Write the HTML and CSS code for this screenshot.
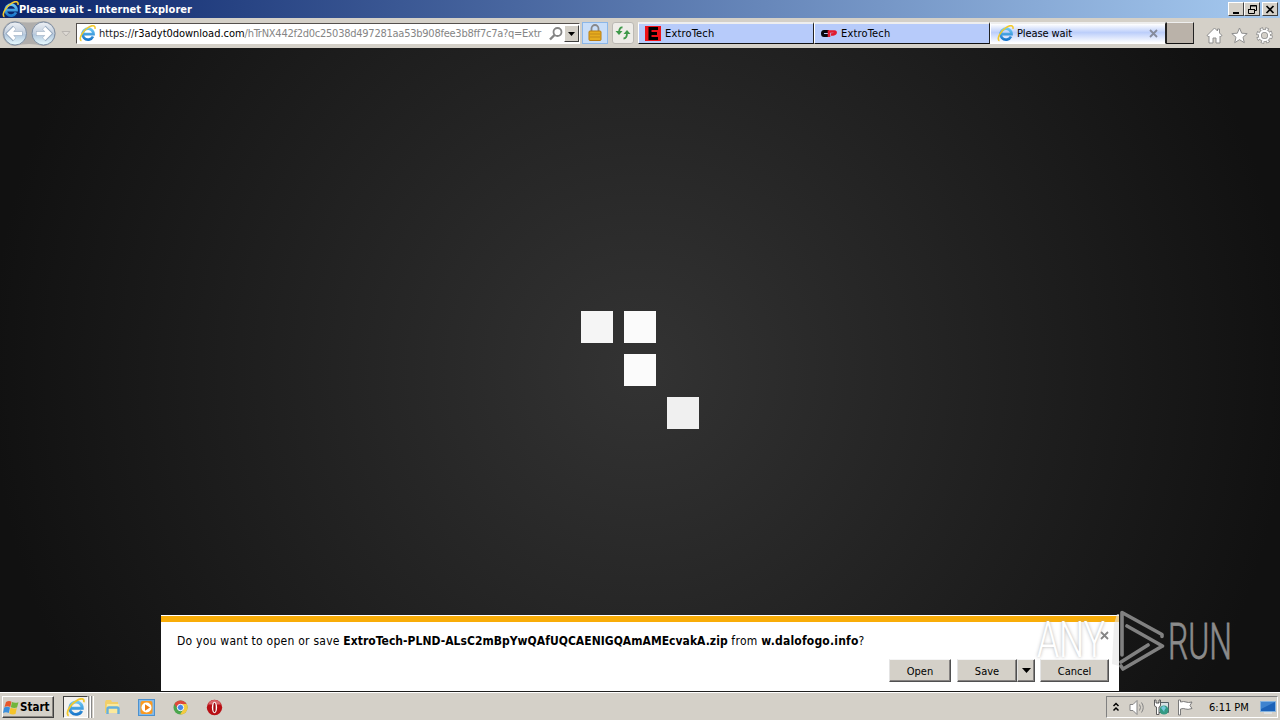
FILE: index.html
```html
<!DOCTYPE html>
<html lang="en">
<head>
<meta charset="utf-8">
<title>Please wait</title>
<link rel="stylesheet" href="styles.css">
</head>
<body>
<svg class="defs" width="0" height="0">
  <defs>
    <linearGradient id="blue" x1="0" y1="0" x2="0" y2="1"><stop offset="0" stop-color="#6cc8f4"/><stop offset="1" stop-color="#1a78cc"/></linearGradient>
    <linearGradient id="orb" x1="0" y1="0" x2="0" y2="1"><stop offset="0" stop-color="#eef1f5"/><stop offset=".48" stop-color="#c3cfde"/><stop offset=".55" stop-color="#b4c9de"/><stop offset="1" stop-color="#e8fbff"/></linearGradient>
    <symbol id="ie" viewBox="0 0 16 16">
      <path d="M13.2 10.8A5.2 5.2 0 1 1 13.7 8.6H4.6" fill="none" stroke="url(#blue)" stroke-width="2.5"/>
      <path d="M2.300 14.800C-.6 14 2.500 6 8.500 2.500 12-.1 15.800-.2 15 3.600" fill="none" stroke="#f2c92d" stroke-width="1.500"/>
    </symbol>
  </defs>
</svg>
<div class="screen">
  <header class="titlebar">
    <svg class="title-icon" width="17" height="17"><use href="#ie"/></svg>
    <span class="title">Please wait - Internet Explorer</span>
    <div class="window-buttons">
      <span class="winbtn"><svg width="14" height="12"><path d="M3 9h6" stroke="#000" stroke-width="2"/></svg></span>
      <span class="winbtn"><svg width="14" height="12"><path d="M4.500 5V1.500h6v5H9M4 2h7M2.500 5.500h6v4h-6zM2 5.500h7" fill="none" stroke="#000"/></svg></span>
      <span class="winbtn last"><svg width="14" height="12"><path d="M2.500 2l7 7M9.500 2l-7 7" stroke="#000" stroke-width="1.700"/></svg></span>
    </div>
  </header>

  <nav class="toolbar">
    <svg class="nav-orbs" width="76" height="30" viewBox="0 18 76 30">
      <path d="M15 21Q29 24 43 21A12.500 12.500 0 0 1 43 46Q29 42 15 46A12.500 12.500 0 0 1 15 21" fill="#b0aeac"/>
      <g fill="url(#orb)" stroke="#7f8fa3"><circle cx="15" cy="33.500" r="11.500"/><circle cx="43.500" cy="33.500" r="11.500"/></g>
      <g fill="none" stroke="#96a9bf" stroke-width="4.600"><path d="M22.500 33.500H9M14.500 27.500l-6 6 6 6M36 33.500h13.500M44 27.500l6 6-6 6"/></g>
      <g fill="none" stroke="#fff" stroke-width="3.400"><path d="M22 33.500H9M14.500 28l-5.500 5.500 5.500 5.500M36.500 33.500h13M44 28l5.500 5.500-5.500 5.500"/></g>
      <path d="M62 31.500h8l-4 4.500z" fill="#dedad5" stroke="#b8b4b0"/>
    </svg>
    <div class="address">
      <svg width="17" height="17"><use href="#ie"/></svg>
      <span class="url"><span class="scheme">https://</span><span class="host">r3adyt0download.com</span><span class="path">/hTrNX442f2d0c25038d497281aa53b908fee3b8ff7c7a?q=Extr</span></span>
      <svg class="search" width="15" height="16"><circle cx="8.500" cy="6" r="4" fill="none" stroke="#858585" stroke-width="1.800"/><path d="M5.500 9L1 13.500" stroke="#858585" stroke-width="2.400"/></svg>
      <span class="drop"><svg width="9" height="6"><path d="M1 1h7L4.500 5z"/></svg></span>
    </div>
    <span class="lock"><svg width="14" height="18"><path d="M3.500 8V4.500a3.500 3.500 0 0 1 7 0V8" fill="none" stroke="#88888a" stroke-width="1.800"/><rect x="1" y="7" width="12" height="9.500" rx="1" fill="#e5ac1e" stroke="#b97c10"/><path d="M2 10h10M2 13h10" stroke="#c48919"/></svg></span>
    <span class="refresh"><svg width="18" height="16"><g fill="none" stroke="#3f994a" stroke-width="1.800"><path d="M8.500 2.500Q5.500 2 5 7M9.500 13.500Q13 13.500 13 8"/></g><path d="M1.500 6h7L5 10zM9.500 9h7L13 5z" fill="#3f994a"/></svg></span>
    <div class="tabs">
      <div class="tab"><svg width="16" height="16"><path d="M0 0h16v15H0z" fill="#ef1118"/><path d="M13 2.500H5v10h8M5 7.500h7" fill="none" stroke="#000" stroke-width="3"/></svg><span>ExtroTech</span></div>
      <div class="tab"><svg width="16" height="16"><path d="M8 5.500H3Q1.500 5.500 1.500 7.500T3 9.500h5" fill="none" stroke="#09090c" stroke-width="3"/><path d="M8 11V5.500h5.500Q15 5.500 14.500 7 14 8.500 10 8.500" fill="none" stroke="#e21b2d" stroke-width="2.600"/></svg><span>ExtroTech</span></div>
      <div class="tab active"><svg width="17" height="17"><use href="#ie"/></svg><span class="wait">Please wait</span><svg class="tab-close" width="9" height="9"><path d="M1 1l7 7M8 1L1 8" stroke="#858b9b" stroke-width="1.800"/></svg></div>
      <div class="newtab"></div>
    </div>
    <div class="commands">
      <svg width="17" height="17"><path d="M1 8.500L8.500 1l3 3V2h2v4L16 8.500l-1.500 1-.5-.5v7h-4v-5H7v5H3V9l-.5.500z" fill="#fff" stroke="#8e8e8e"/></svg>
      <svg width="17" height="17"><path d="M8.500 1l2.200 5.200 5.500.4-4.200 3.600 1.300 5.500-4.800-3-4.800 3L5 10.200.8 6.600l5.500-.4z" fill="#fff" stroke="#8e8e8e"/></svg>
      <svg width="17" height="17"><g fill="none"><circle cx="8.500" cy="8.500" r="6.500" stroke="#8e8e8e" stroke-width="3.600" stroke-dasharray="3.100 2.005"/><circle cx="8.500" cy="8.500" r="4.600" stroke="#8e8e8e" stroke-width="3.800"/><circle cx="8.500" cy="8.500" r="6.500" stroke="#fff" stroke-width="2" stroke-dasharray="1.700 3.405" stroke-dashoffset="-.7"/><circle cx="8.500" cy="8.500" r="4.600" stroke="#fff" stroke-width="2.200"/></g></svg>
    </div>
  </nav>

  <main class="page">
    <div class="loader">
      <i class="sq a"></i><i class="sq b"></i><i class="sq c"></i><i class="sq d"></i>
    </div>
    <section class="notice">
      <div class="notice-text"><span class="ask">Do you want to open or save </span><b class="file">ExtroTech-PLND-ALsC2mBpYwQAfUQCAENIGQAmAMEcvakA.zip</b><span class="from"> from </span><b class="site">w.dalofogo.info</b><span>?</span></div>
      <svg class="notice-close" width="9" height="9"><path d="M1 1l7 7M8 1L1 8" stroke="#858585" stroke-width="1.800"/></svg>
      <div class="actions">
        <span class="button open">Open</span>
        <span class="button save">Save</span><span class="button arrow"><svg width="9" height="6"><path d="M0 0h9L4.500 5z"/></svg></span>
        <span class="button cancel">Cancel</span>
      </div>
    </section>
    <svg class="watermark" width="204" height="70" viewBox="1033 606 204 70">
      <path d="M1114 624l3-10h2v52l-7-2z" fill="#e4e4e4" opacity=".6"/>
      <g class="wm-text">
        <text class="wm-any" x="1037" y="657" textLength="68" lengthAdjust="spacingAndGlyphs">ANY</text>
        <text class="wm-run" x="1168" y="659" textLength="64" lengthAdjust="spacingAndGlyphs">RUN</text>
      </g>
      <g fill="none" stroke="#8b8b8b" stroke-width="3.600" stroke-linejoin="round" stroke-linecap="round" opacity=".92">
        <path d="M1122 655V612.500L1162 634.500v2"/>
        <path d="M1127 626L1162.500 646 1123 669 1121 666"/>
        <path d="M1121 662L1148 645"/>
      </g>
    </svg>
  </main>

  <footer class="taskbar">
    <div class="start"><svg width="17" height="17"><path d="M3 3q3-1.800 5.500-.2L7.300 8Q4.500 6.500 1.500 8z" fill="#e8582b"/><path d="M9 3q3 1.500 6.500.2L14 8.500q-3 1-6.200-.3z" fill="#72b63c"/><path d="M1.200 8.500q3-1.500 5.800 0L5.800 14Q3 12.500 0 14z" fill="#3b8fdc"/><path d="M7.500 8.800q3 1.300 6.300.2L12.500 15q-3 1-6.200-.5z" fill="#f5c42b"/></svg><b>Start</b></div>
    <div class="task-active"><svg width="19" height="19"><use href="#ie"/></svg></div>
    <div class="stack"></div><div class="stack"></div>
    <div class="launch">
      <svg width="17" height="17"><path d="M1 3l1-2h5l1 2h6v11H1z" fill="#f2cf69"/><path d="M3 5h12v9H2z" fill="#fbe99c"/><path d="M3.500 15v-5q0-1.500 1.500-1.500h8q1.500 0 1.500 1.500v5" fill="none" stroke="#65afdc" stroke-width="2.400"/></svg>
      <svg width="17" height="17"><rect x=".5" y=".5" width="16" height="16" fill="#83b9e8" stroke="#4c91cf"/><rect x="2.500" y="2" width="12" height="13" rx="2" fill="#fa9a22"/><circle cx="8.500" cy="8.500" r="5" fill="#fff"/><path d="M7 5.300l5 3.200-5 3.200z" fill="#ef7d12"/></svg>
      <svg width="17" height="17"><circle cx="8.500" cy="8.500" r="7" fill="#4ba64d"/><path d="M2.400 5A7 7 0 0 1 14.600 5H8.500L6 10z" fill="#df483b"/><path d="M8.500 5h6.100a7 7 0 0 1-6.600 10.500L11.500 10z" fill="#f5ca3f"/><circle cx="8.500" cy="8.500" r="3.200" fill="#4587e8" stroke="#fff"/></svg>
      <svg width="17" height="17"><circle cx="8.500" cy="8.500" r="7.700" fill="#b80f15"/><path d="M2 5.500a7 7 0 0 1 13 0z" fill="#d9656a"/><ellipse cx="8.500" cy="8.500" rx="2.600" ry="5.800" fill="#fff"/><ellipse cx="8.500" cy="8.500" rx="1.200" ry="4.800" fill="#a20c12"/></svg>
    </div>
    <div class="tray">
      <svg class="chev" width="9" height="10"><path d="M1.500 4l2.500-2.500L6.500 4M1.500 8.500L4 6l2.500 2.500" fill="none" stroke="#000" stroke-width="1.500"/></svg>
      <svg class="speaker" width="17" height="17"><path d="M1 5.500h3l4-4v14l-4-4H1z" fill="#fff" stroke="#858585"/><path d="M10.500 5.500q2 3 0 6M12.500 3.500q3.500 5 0 10" fill="none" stroke="#858585"/></svg>
      <svg class="net" width="17" height="17"><path d="M5.500 3.500h10v10h-10z" fill="#d8e0e4" stroke="#566167"/><path d="M1.500 1v5q0 2 2 2v7.500H6V8q1.500 0 1.500-2V1H6v3H3V1z" fill="#fff" stroke="#5d5d5d"/><circle cx="11" cy="11" r="4.500" fill="#349a83"/><path d="M8 9q3-4 5 0-3 3-1 5" fill="#75c7dd"/></svg>
      <svg class="flag" width="17" height="17"><path d="M1.500 1v15h2V10q3-1 5 0t6.500-.5l-2-3 2-3.500q-4 1-6 0t-5.500 0V1z" fill="#fff" stroke="#7a7a7a"/></svg>
      <span class="clock">6:11 PM</span>
      <svg class="desk" width="17" height="13"><path d="M.5.5h15v10H.5z" fill="#1c62b8" stroke="#83b2df"/><path d="M1 1h14L1 8z" fill="#3e83cf"/><path d="M4 12h8" stroke="#e5eef7"/></svg>
    </div>
  </footer>
</div>
</body>
</html>
```
FILE: styles.css
```css
* { box-sizing: border-box; }
body { margin: 0; font-family: "DejaVu Sans Condensed", "DejaVu Sans", sans-serif; font-stretch: condensed; font-size: 11px; color: #000; }
svg { display: block; flex: none; }
.defs { position: absolute; }
.screen { width: 1280px; height: 720px; display: flex; flex-direction: column; overflow: hidden; background: #d4d0c8; white-space: nowrap; }
.titlebar { height: 18px; flex: none; display: flex; align-items: center; background: linear-gradient(90deg, #0a246a, #a6caf0); padding-left: 2px; }
.title { color: #fff; font-weight: bold; letter-spacing: .07px; }
.window-buttons { margin-left: auto; display: flex; padding-right: 2px; }
.winbtn { width: 16px; height: 14px; padding: 1px; background: #d4d0c8; border: 1px solid; border-color: #fff #404040 #404040 #fff; }
.last { margin-left: 2px; }
.toolbar { height: 30px; flex: none; display: flex; align-items: flex-start; background: #d4d0c8; }
.address { width: 504px; height: 21px; margin-top: 5px; display: flex; align-items: center; background: #fff; border: 1px solid; border-color: #55504d #fff #fff #55504d; padding-left: 2px; }
.url { margin-left: 3px; width: 448px; overflow: hidden; color: #858585; }
.scheme { color: #222; letter-spacing: -.03px; }
.host { color: #000; letter-spacing: -.03px; }
.path { letter-spacing: -.25px; }
.search { margin-left: 4px; }
.drop { width: 15px; height: 17px; margin-left: auto; display: flex; align-items: center; justify-content: center; background: #d4d0c8; border: 1px solid; border-color: #fff #404040 #404040 #fff; }
.lock { width: 26px; height: 22px; margin: 4px 0 0 2px; display: flex; align-items: center; justify-content: center; background: #c9def8; border: 1px solid #8cb7e8; }
.refresh { width: 22px; height: 22px; margin: 4px 0 0 4px; display: flex; align-items: center; justify-content: center; background: #eeece8; border: 1px solid #bcb9b4; border-radius: 3px; }
.tabs { display: flex; margin: 4px 0 0 4px; }
.tab { width: 176px; height: 22px; display: flex; align-items: center; gap: 4px; padding-left: 6px; letter-spacing: .17px; background: #b7cbfa; border-style: solid; border-color: #eee #222 #101010 #fff; border-width: 2px 1px 1px 1px; }
.active { gap: 3px; background: linear-gradient(180deg, #fff, #bccefa 45%, #fff); border-bottom-color: #fff; }
.wait { letter-spacing: -.1px; }
.tab-close { margin-left: auto; margin-right: 7px; }
.newtab { width: 28px; height: 22px; background: #bab2a9; border: 1px solid; border-color: #eee #222 #111 #222; }
.commands { display: flex; gap: 8px; margin: 9px 0 0 12px; }
.page { height: 644px; flex: none; position: relative; display: flex; flex-direction: column; align-items: center; background: radial-gradient(circle 650px at 50% 50%, #333 0%, #111 100%); }
.loader { margin-top: 263px; display: grid; grid-template-columns: repeat(3, 32px); grid-template-rows: repeat(3, 32px); gap: 11px; }
.sq { background: #fbfbfb; }
.a { background: #f5f5f5; }
.c { grid-column: 2; grid-row: 2; }
.d { grid-column: 3; grid-row: 3; background: #f0f0f0; }
.notice { position: absolute; left: 161px; bottom: 1px; width: 958px; height: 76px; background: #fff; border-top: 1px solid #fff; }
.notice::before { content: ""; display: block; height: 6px; background: #f9ad08; }
.notice-text { padding: 11px 16px 0; line-height: 16px; font-size: 12px; }
.notice-text span { white-space: pre; }
.ask { letter-spacing: .25px; }
.file { letter-spacing: .03px; }
.from { letter-spacing: .28px; }
.site { letter-spacing: .2px; }
.notice-close { position: absolute; right: 10px; top: 15px; }
.actions { display: flex; justify-content: flex-end; padding: 10px 10px 0 0; }
.button { height: 23px; padding-top: 1px; display: flex; align-items: center; justify-content: center; background: #d4d0c8; border: 1px solid; border-color: #f5f5f5 #505050 #505050 #e4e4e4; box-shadow: inset -1px -1px #858280; }
.open { width: 62px; margin-right: 6px; }
.save { width: 60px; }
.arrow { width: 18px; margin-right: 5px; }
.cancel { width: 69px; }
.watermark { position: absolute; left: 1033px; top: 558px; }
.wm-text { font: 300 50px Roboto, "Liberation Sans", sans-serif; }
.wm-any { fill: #fff; text-shadow: 0 0 4px #aaa; }
.wm-run { fill: #8b8b8b; stroke: #8b8b8b; stroke-width: .8px; }
.taskbar { height: 28px; flex: none; display: flex; align-items: flex-start; background: #d4d0c8; border-top: 1px solid #fff; padding: 3px 2px 0; }
.start { width: 52px; height: 22px; display: flex; align-items: center; background: #d4d0c8; border: 1px solid; border-color: #fff #404040 #404040 #fff; box-shadow: inset -1px -1px #898580; font-size: 11.5px; }
.task-active { width: 25px; height: 22px; margin-left: 9px; display: flex; align-items: center; justify-content: center; background: #f3f1ee; border: 1px solid; border-color: #404040 #fff #fff #404040; }
.stack { width: 3px; height: 22px; background: #d4d0c8; border-right: 1px solid #fff; border-left: 1px solid #888; }
.launch { display: flex; gap: 17px; margin: 3px 0 0 10px; }
.tray { width: 172px; height: 22px; margin-left: auto; display: flex; align-items: center; border: 1px solid; border-color: #808080 #fff #fff #808080; padding-left: 5px; }
.speaker { margin-left: 8px; }
.net { margin-left: 7px; }
.flag { margin-left: 7px; }
.clock { margin-left: 15px; width: 42px; }
.desk { margin-left: 9px; }
```
